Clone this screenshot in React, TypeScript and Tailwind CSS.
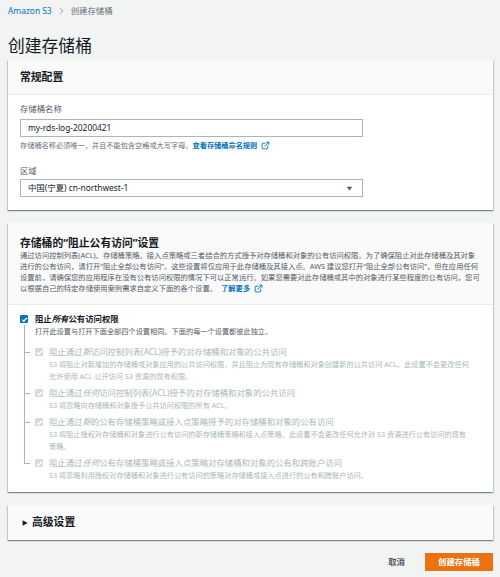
import { ExternalLink } from 'lucide-react'

const font = { fontFamily: '"Noto Sans", "Noto Sans CJK SC", sans-serif' }

function Ext() {
  return <ExternalLink size={9} strokeWidth={2.4} className="inline-block ml-[4px] -mt-[2px] text-[#0073bb]" />
}

function Card({ children }: { children: React.ReactNode }) {
  return (
    <div className="bg-white shadow-[0_1px_1px_0_rgba(0,28,36,0.3),1px_1px_1px_0_rgba(0,28,36,0.15),-1px_1px_1px_0_rgba(0,28,36,0.15)]">
      {children}
    </div>
  )
}

function Check({ disabled }: { disabled?: boolean }) {
  return (
    <span
      className={`flex items-center justify-center w-[8px] h-[8px] shrink-0 rounded-[1px] ${
        disabled ? 'bg-[#d5dbdb]' : 'bg-[#0073bb]'
      }`}
    >
      <svg viewBox="0 0 10 10" className="w-[7px] h-[7px]">
        <path d="M1.5 5.2 L4 7.5 L8.5 2.5" fill="none" stroke="white" strokeWidth="1.8" />
      </svg>
    </span>
  )
}

const subs = [
  {
    title: (
      <>
        阻止通过<i>新</i>访问控制列表(ACL)授予的对存储桶和对象的公共访问
      </>
    ),
    desc: 'S3 将阻止对新增加的存储桶或对象应用的公共访问权限，并且阻止为现有存储桶和对象创建新的公共访问 ACL。此设置不会更改任何允许使用 ACL 公开访问 S3 资源的现有权限。',
  },
  {
    title: (
      <>
        阻止通过<i>任何</i>访问控制列表(ACL)授予的对存储桶和对象的公共访问
      </>
    ),
    desc: 'S3 将忽略向存储桶和对象授予公共访问权限的所有 ACL。',
  },
  {
    title: (
      <>
        阻止通过<i>新</i>的公有存储桶策略或接入点策略授予的对存储桶和对象的公有访问
      </>
    ),
    desc: 'S3 将阻止授权对存储桶和对象进行公有访问的新存储桶策略和接入点策略。此设置不会更改任何允许对 S3 资源进行公有访问的现有策略。',
  },
  {
    title: (
      <>
        阻止通过<i>任何</i>公有存储桶策略或接入点策略对存储桶和对象的公有和跨账户访问
      </>
    ),
    desc: 'S3 将忽略利用授权对存储桶和对象进行公有访问的策略对存储桶或接入点进行的公有和跨账户访问。',
  },
]

export default function App() {
  return (
    <div style={font} className="min-h-[577px] bg-[#f2f3f3] text-[#16191f] pl-[8px] pr-[7px]">
      {/* Breadcrumb */}
      <div className="flex items-center h-[22px] text-[8.4px]">
        <span className="text-[#0073bb]">Amazon S3</span>
        <svg viewBox="0 0 10 10" className="w-[7px] h-[8px] mx-[6px]">
          <path d="M3 1 L7 5 L3 9" fill="none" stroke="#879596" strokeWidth="1.2" />
        </svg>
        <span className="text-[#687078]">创建存储桶</span>
      </div>

      <h1 className="text-[16.8px] leading-[26px] mt-[11px] mb-[1px] font-normal">创建存储桶</h1>

      <div className="flex flex-col gap-[13px]">
        {/* General */}
        <Card>
          <div className="h-[35px] flex items-center px-[12px] bg-[#fafafa] border-b border-[#eaeded]">
            <h2 className="text-[10.8px] font-bold">常规配置</h2>
          </div>
          <div className="px-[12px] pt-[8px] pb-[13px]">
            <div className="text-[8.4px] leading-[12px] text-[#545b64]">存储桶名称</div>
            <div className="mt-[4px] w-[343px] h-[18px] border border-[#aab7b8] flex items-center px-[7px] text-[8.4px]">
              my-rds-log-20200421
            </div>
            <div className="mt-[2px] text-[7.2px] leading-[12px] text-[#687078]">
              存储桶名称必须唯一，并且不能包含空格或大写字母。
              <span className="text-[#0073bb] font-bold">查看存储桶命名规则</span>
              <Ext />
            </div>
            <div className="mt-[14px] text-[8.4px] leading-[12px] text-[#545b64]">区域</div>
            <div className="mt-[2px] w-[343px] h-[18px] border border-[#aab7b8] flex items-center justify-between px-[7px] text-[8.4px]">
              <span>中国(宁夏) cn-northwest-1</span>
              <svg viewBox="0 0 10 10" className="w-[7px] h-[7px] mr-[2px]">
                <path d="M1 2.5 H9 L5 8 Z" fill="#545b64" />
              </svg>
            </div>
          </div>
        </Card>

        {/* Block public access */}
        <Card>
          <div className="bg-[#fafafa] border-b border-[#eaeded] px-[12px] pt-[13px] pb-[10px]">
            <h2 className="text-[10.8px] leading-[14px] font-bold">存储桶的“阻止公有访问”设置</h2>
            <p className="text-[7.3px] leading-[11px] text-[#545b64]">
              通过访问控制列表(ACL)、存储桶策略、接入点策略或三者结合的方式授予对存储桶和对象的公有访问权限。为了确保阻止对此存储桶及其对象进行的公有访问，请打开“阻止全部公有访问”。这些设置将仅应用于此存储桶及其接入点。AWS 建议您打开“阻止全部公有访问”，但在应用任何设置前，请确保您的应用程序在没有公有访问权限的情况下可以正常运行。如果您需要对此存储桶或其中的对象进行某些程度的公有访问，您可以根据自己的特定存储使用案例需求自定义下面的各个设置。
              <span className="text-[#0073bb] font-bold ml-[4px]">了解更多</span>
              <Ext />
            </p>
          </div>
          <div className="px-[12px] pt-[8px] pb-[11px]">
            <div className="flex items-center gap-[7px] h-[12px]">
              <Check />
              <span className="text-[8.4px] leading-[12px] font-bold">
                阻止<i>所有</i>公有访问权限
              </span>
            </div>
            <div className="ml-[4px] flex">
              <div className="w-[11px] shrink-0 border-l border-[#aab7b8]" />
              <div className="text-[7.2px] leading-[12px] text-[#545b64]">
                打开此设置与打开下面全部四个设置相同。下面的每一个设置都彼此独立。
              </div>
            </div>
            <div className="ml-[4px] flex flex-col">
              {subs.map((s, i) => {
                const top = i === 0 ? 9 : 5
                const last = i === subs.length - 1
                return (
                  <div key={i} className={`flex ${i === 0 ? 'pt-[9px]' : 'pt-[5px]'}`}>
                    <div className="relative w-[11px] shrink-0">
                      <div
                        className="absolute left-0 border-l border-[#aab7b8]"
                        style={{ top: -top, height: last ? top + 6 : undefined, bottom: last ? undefined : -1 }}
                      />
                      <div className="absolute left-0 top-[6px] w-[6px] border-t border-[#aab7b8]" />
                    </div>
                    <div className="flex gap-[6px]">
                      <div className="pt-[2px]">
                        <Check disabled />
                      </div>
                      <div className="text-[#aab7b8]">
                        <div className="text-[8.4px] leading-[12px]">{s.title}</div>
                        <div className="text-[7.2px] leading-[12px] pr-[10px]">{s.desc}</div>
                      </div>
                    </div>
                  </div>
                )
              })}
            </div>
          </div>
        </Card>

        {/* Advanced */}
        <Card>
          <div className="h-[35px] flex items-center pl-[14px] bg-[#fafafa]">
            <svg viewBox="0 0 10 10" className="w-[6px] h-[6px] mr-[4px]">
              <path d="M1 0.5 L9.5 5 L1 9.5 Z" fill="#16191f" />
            </svg>
            <h2 className="text-[10.8px] font-bold">高级设置</h2>
          </div>
        </Card>
      </div>

      <div className="flex justify-end items-center gap-[20px] mt-[13px]">
        <button className="text-[8.4px] font-bold text-[#545b64]">取消</button>
        <button className="h-[18px] w-[68px] bg-[#ec7211] text-white text-[8.4px] font-bold">创建存储桶</button>
      </div>
    </div>
  )
}
